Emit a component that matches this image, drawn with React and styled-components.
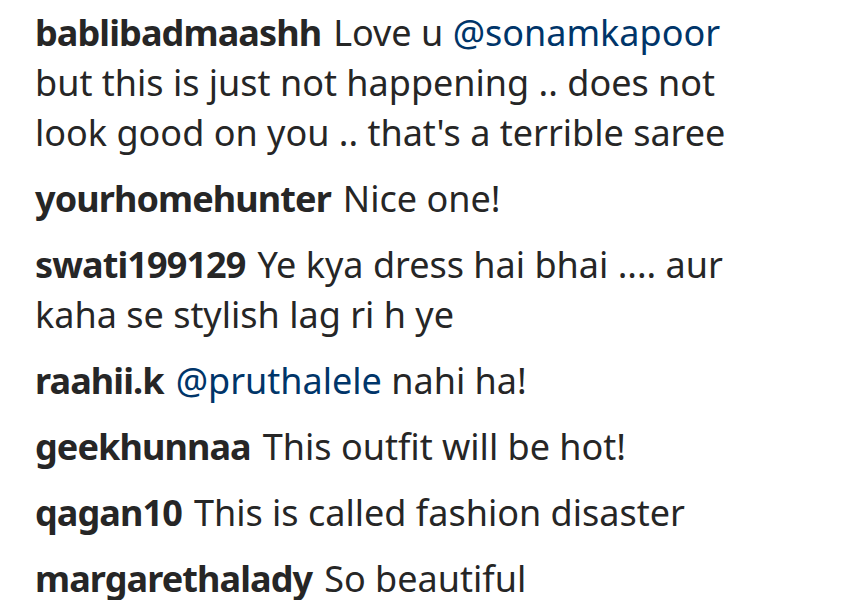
import React from 'react';
import styled, { createGlobalStyle } from 'styled-components';

const GlobalStyle = createGlobalStyle`
  body {
    margin: 0;
    background: #ffffff;
  }
`;

const CommentList = styled.ul`
  list-style-type: none;
  margin: 0;
  padding: 8px 0 0 35px;
  width: 750px;
  display: flex;
  flex-direction: column;
  gap: 16px;
  font-family: 'Noto Sans', 'Open Sans', sans-serif;
  font-size: 36px;
  line-height: 50px;
  color: #262626;
`;

const Comment = styled.li`
  margin: 0;
`;

const User = styled.span`
  font-weight: 700;
  letter-spacing: -0.9px;
  margin-right: 12px;
`;

const Mention = styled.span`
  color: #003569;
`;

const comments = [
  {
    user: 'bablibadmaashh',
    body: [
      'Love u ',
      { mention: '@sonamkapoor' },
      " but this is just not happening .. does not look good on you .. that's a terrible saree",
    ],
  },
  { user: 'yourhomehunter', body: ['Nice one!'] },
  { user: 'swati199129', body: ['Ye kya dress hai bhai .... aur kaha se stylish lag ri h ye'] },
  { user: 'raahii.k', body: [{ mention: '@pruthalele' }, ' nahi ha!'] },
  { user: 'geekhunnaa', body: ['This outfit will be hot!'] },
  { user: 'qagan10', body: ['This is called fashion disaster'] },
  { user: 'margarethalady', body: ['So beautiful'] },
];

const App = () => {
  return (
    <>
      <GlobalStyle />
      <CommentList>
        {comments.map((c) => (
          <Comment key={c.user}>
            <User>{c.user}</User>
            {c.body.map((part, i) =>
              typeof part === 'string' ? (
                <React.Fragment key={i}>{part}</React.Fragment>
              ) : (
                <Mention key={i}>{part.mention}</Mention>
              )
            )}
          </Comment>
        ))}
      </CommentList>
    </>
  );
};

export default App;
